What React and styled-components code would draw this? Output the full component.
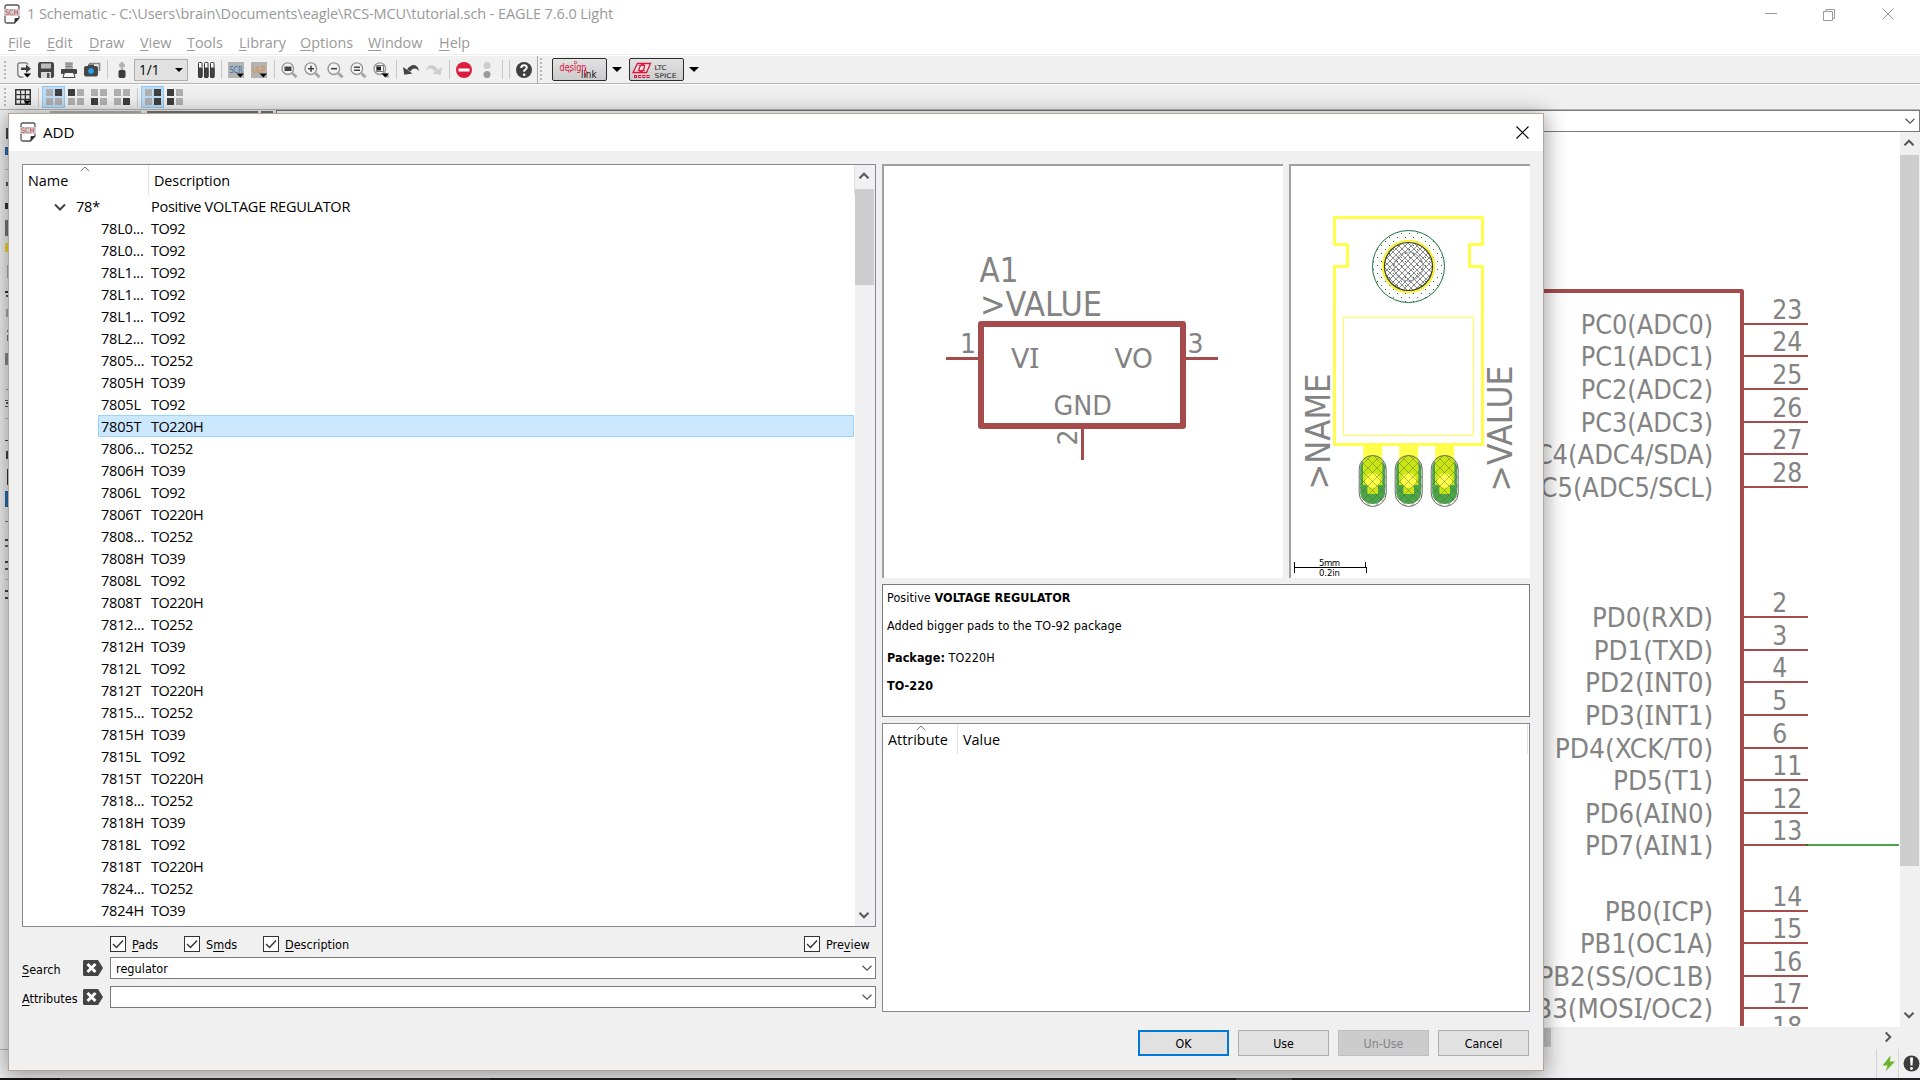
import React from "react";
import styled, { createGlobalStyle, css } from "styled-components";

const UI = `"Open Sans", "Noto Sans", sans-serif`;
const SMALL = `"DejaVu Sans Condensed", "DejaVu Sans", sans-serif`;

const Global = createGlobalStyle`
  * { box-sizing: border-box; }
  html, body { margin: 0; padding: 0; overflow: hidden; background: #f0f0f0; }
  svg { display: block; flex: none; }
  u { text-underline-offset: 2px; text-decoration-thickness: 1px; }
`;

/* ---------- main window ---------- */
const Window = styled.div`
  position: relative;
  width: 1920px;
  height: 1080px;
  display: flex;
  flex-direction: column;
  background: #f0f0f0;
  overflow: hidden;
  font-family: ${UI};
  color: #000;
`;
const TitleBar = styled.header`
  height: 30px;
  flex: none;
  display: flex;
  align-items: center;
  background: #fff;
  padding: 0 0 2px 4px;
`;
const Title = styled.span`
  margin-left: 7px;
  font-size: ${(p) => p.$size}px;
  line-height: 20px;
  letter-spacing: ${(p) => p.$ls || 0}px;
  color: ${(p) => p.$color};
  white-space: pre;
`;
const Controls = styled.div`
  margin-left: auto;
  display: flex;
  align-items: center;
`;
const MenuBar = styled.nav`
  height: 25px;
  flex: none;
  display: flex;
  background: #fff;
  border-bottom: 1px solid #f0f0f0;
  padding: 1px 0 0 8px;
`;
const MenuItem = styled.span`
  width: ${(p) => p.$w}px;
  font-size: 14.4px;
  line-height: 24px;
  color: #999;
  white-space: nowrap;
`;
const Toolbar = styled.div`
  height: ${(p) => p.$h}px;
  flex: none;
  display: flex;
  align-items: center;
  background: #f0f0f0;
  border-top: 1px solid #fff;
  border-bottom: 1px solid #b4b4b4;
  padding-left: 4px;
`;
const Handle = styled.div`
  width: ${(p) => p.$w}px;
  flex: none;
`;
const Cell = styled.div`
  width: 23px;
  height: 22px;
  flex: none;
  padding: 0 3px 0 4px;
  display: flex;
  align-items: center;
  ${(p) =>
    p.$on &&
    css`
      margin: 0 -1px 0 1px;
      padding: 0 2px 0 3px;
      background: #c0dcf3;
      border: 1px solid #90c8f6;
    `}
`;
const Sep = styled.div`
  width: 1px;
  height: 19px;
  flex: none;
  background: #c8c8c8;
  margin: 0 2px 0 4px;
`;
const EdgeLine = styled.div`
  width: 1px;
  height: 28px;
  background: #a8a8a8;
  margin: 0 2px;
`;
const SheetCombo = styled.div`
  width: 54px;
  height: 22px;
  margin: 0 6px 0 1px;
  border: 1px solid #adadad;
  background: #e1e1e1;
  display: flex;
  align-items: center;
  justify-content: space-between;
  padding: 0 4px;
  font-size: 13.6px;
  line-height: 20px;
`;
const BrandButton = styled.div`
  width: 55px;
  height: 23px;
  flex: none;
  margin-left: ${(p) => p.$ml}px;
  border: 1px solid #2b2b2b;
  border-radius: 2px;
  background: linear-gradient(#e2e2e2, #cccccc);
`;
const Caret = styled.div`
  width: 0;
  height: 0;
  margin-left: ${(p) => p.$ml || 0}px;
  border: ${(p) => p.$s || 5}px solid transparent;
  border-top-color: #000;
  border-bottom: none;
`;
const CommandRow = styled.div`
  height: 22px;
  flex: none;
  display: flex;
  gap: 3px;
  padding: 0 0 0 50px;
`;
const CommandPart = styled.div`
  width: ${(p) => p.$w}px;
  margin: 1px ${(p) => p.$mr || 0}px 0 0;
  border: 1px solid ${(p) => p.$c};
  border-width: 2px 1px 1px;
`;
const CommandInput = styled.div`
  flex: 1;
  height: 22px;
  background: #fff;
  border: 1px solid #7a7a7a;
  display: flex;
  align-items: center;
  justify-content: flex-end;
  padding-right: 3px;
`;
const Work = styled.div`
  height: 895px;
  flex: none;
  display: flex;
`;
const LeftTools = styled.div`
  width: 90px;
  padding-left: 5px;
`;
const Canvas = styled.div`
  flex: 1;
  background: #fff;
  display: flex;
  justify-content: flex-end;
  overflow: hidden;
`;
const VScroll = styled.div`
  width: 20px;
  flex: none;
  background: #f0f0f0;
  display: flex;
  flex-direction: column;
  align-items: stretch;
`;
const ArrowSlot = styled.div`
  height: ${(p) => p.$h}px;
  display: flex;
  align-items: center;
  justify-content: center;
  padding: 0 2px ${(p) => p.$pb || 0}px 0;
`;
const Thumb = styled.div`
  height: ${(p) => p.$h}px;
  margin-right: 1px;
  background: #cdcdcd;
`;
const Grow = styled.div`
  flex: 1;
`;
const HScroll = styled.div`
  height: 20px;
  flex: none;
  display: flex;
  align-items: center;
  padding-right: 26px;
`;
const HThumb = styled.div`
  width: 1451px;
  margin-left: 100px;
  height: 19px;
  background: #c4c4c4;
`;
const Status = styled.footer`
  height: 31px;
  flex: none;
  display: flex;
  align-items: center;
  justify-content: flex-end;
  padding-top: 2px;
`;
const StatusEdge = styled.div`
  width: 60px;
  height: 29px;
  margin-right: auto;
  border-top: 1px solid #b4b4b4;
`;
const StatusSep = styled.div`
  width: 1px;
  height: 29px;
  background: #d4d4d4;
`;
const TaskEdge = styled.div`
  height: 2px;
  display: flex;
  background: #212226;
`;
const TaskPiece = styled.div`
  width: ${(p) => p.$w}px;
  background: ${(p) => p.$c};
`;

/* ---------- dialog ---------- */
const Dialog = styled.section`
  position: absolute;
  left: 8px;
  top: 113px;
  width: 1536px;
  height: 958px;
  border: 1px solid #b5a596;
  background: #f0f0f0;
  box-shadow: 0 3px 20px 2px rgba(0, 0, 0, 0.38);
  display: flex;
  flex-direction: column;
`;
const DialogTitle = styled.div`
  height: 37px;
  flex: none;
  background: #fff;
  display: flex;
  align-items: center;
  padding: 0 14px 1px 11px;
`;
const DialogBody = styled.div`
  flex: 1;
  display: flex;
  gap: 6px;
  padding: 13px 13px 0;
`;
const LeftCol = styled.div`
  width: 854px;
  display: flex;
  flex-direction: column;
`;
const RightCol = styled.div`
  width: 648px;
  display: flex;
  flex-direction: column;
  gap: 6px;
`;
const TreeBox = styled.div`
  height: 763px;
  flex: none;
  border: 1px solid #828790;
  background: #fff;
  display: flex;
`;
const TreeMain = styled.div`
  flex: 1;
  display: flex;
  flex-direction: column;
`;
const HeaderRow = styled.div`
  height: 30px;
  flex: none;
  display: flex;
`;
const HeaderCell = styled.div`
  width: ${(p) => p.$w}px;
  ${(p) => p.$grow && "flex: 1;"}
  border-right: 1px solid #e2e2e2;
  padding-left: 5px;
  display: flex;
  flex-direction: column;
  font-size: 14.4px;
  line-height: 20px;
  letter-spacing: ${(p) => p.$ls || 0}px;
`;
const SortSlot = styled.div`
  height: 6px;
  padding: 1px 0 0 ${(p) => p.$x || 0}px;
`;
const Row = styled.div`
  height: 22px;
  flex: none;
  display: flex;
  align-items: center;
  margin: 0 1px 0 75px;
  padding-top: 1px;
  border: 1px solid ${(p) => (p.$sel ? "#99d1ff" : "transparent")};
  background: ${(p) => (p.$sel ? "#cce8ff" : "transparent")};
  font-size: 14.5px;
  line-height: 20px;
  white-space: pre;
`;
const NameCell = styled.span`
  width: 52px;
  padding-left: 2px;
  letter-spacing: -0.18px;
`;
const DescCell = styled.span`
  letter-spacing: ${(p) => p.$ls ?? -0.45}px;
`;
const ParentRow = styled(Row)`
  margin-left: 30px;
`;
const ParentName = styled.span`
  width: 85px;
  padding-left: 10px;
  letter-spacing: -0.2px;
`;
const Checks = styled.div`
  height: 16px;
  margin: 9px 0 5px 88px;
  display: flex;
  align-items: center;
  font: 12.5px/16px ${SMALL};
`;
const Check = styled.label`
  width: ${(p) => p.$w}px;
  margin-left: ${(p) => p.$ml || 0};
  display: flex;
  gap: 6px;
  align-items: center;
  white-space: nowrap;
  span { padding-top: 1px; }
`;
const Box = styled.i`
  width: 16px;
  height: 16px;
  flex: none;
  border: 1px solid #333;
  background: #fff;
  display: flex;
  align-items: center;
  justify-content: center;
`;
const Field = styled.div`
  height: 22px;
  margin-bottom: 7px;
  display: flex;
  align-items: center;
  font: 12.5px/16px ${SMALL};
`;
const FieldLabel = styled.span`
  width: 61px;
  padding-top: 3px;
`;
const Combo = styled.div`
  flex: 1;
  height: 22px;
  margin-left: 7px;
  border: 1px solid #7a7a7a;
  background: #fff;
  display: flex;
  align-items: center;
  justify-content: space-between;
  padding: 0 2px 0 5px;
  letter-spacing: 0.05px;
  span { padding-top: 1px; }
`;
const Previews = styled.div`
  height: 414px;
  flex: none;
  display: flex;
  justify-content: space-between;
`;
const Preview = styled.div`
  width: ${(p) => p.$w}px;
  background: #fff;
  border: solid #a0a0a0;
  border-width: 2px 0 0 2px;
`;
const Info = styled.div`
  height: 133px;
  flex: none;
  border: 1px solid #7a7a7a;
  background: #fff;
  padding: 5px 4px 0;
  font: 12.5px/16px ${SMALL};
`;
const Para = styled.p`
  margin: 0 0 ${(p) => p.$mb || 12}px;
  letter-spacing: ${(p) => p.$ls ?? 0.07}px;
  white-space: pre;
`;
const AttrBox = styled.div`
  height: 289px;
  flex: none;
  border: 1px solid #828790;
  background: #fff;
  padding-right: 1px;
`;
const Buttons = styled.div`
  margin-top: 12px;
  display: flex;
  justify-content: flex-end;
  gap: 9px;
  padding-right: 1px;
`;
const Button = styled.div`
  width: 91px;
  height: 26px;
  border: ${(p) => (p.$primary ? "2px solid #0078d7" : p.$off ? "1px solid #bfbfbf" : "1px solid #adadad")};
  background: ${(p) => (p.$off ? "#cccccc" : "#e1e1e1")};
  color: ${(p) => (p.$off ? "#838383" : "#000")};
  display: flex;
  align-items: center;
  justify-content: center;
  padding-top: 1px;
  font: 12.3px/16px ${SMALL};
`;

/* ---------- icons ---------- */
const SchIcon = () => (
  <svg width="16" height="20" viewBox="0 0 16 20">
    <path d="M3 1h10q2 0 2 2v11l-4.500 5H3q-2 0-2-2V3q0-2 2-2z" fill="#fff" stroke="#555" strokeWidth="1.300" />
    <path d="M10.500 19.500V15q0-1 1-1h4z" fill="#333" />
    <rect x="0" y="5" width="16" height="7" fill="#cfcfcf" />
    <text x="1" y="11.200" fontSize="7.500" textLength="13.500" lengthAdjust="spacingAndGlyphs" fontFamily={SMALL} fill="#cc3e48">SCH</text>
  </svg>
);
const Chevron = ({ dir = "up", w = 9, c = "#555", s = 2 }) => {
  const r = { up: 0, right: 90, down: 180 }[dir];
  return (
    <svg width="12" height="12" viewBox="-6 -6 12 12">
      <path d={`M${-w / 2} ${w / 4}L0 ${-w / 4}L${w / 2} ${w / 4}`} transform={`rotate(${r})`} fill="none" stroke={c} strokeWidth={s} />
    </svg>
  );
};
const SortMark = () => (
  <svg width="10" height="6" viewBox="0 0 10 6">
    <path d="M.7 5.200L5 1l4.300 4.200" fill="none" stroke="#777" />
  </svg>
);
const Grip = ({ h = 20 }) => (
  <svg width="3" height={h}>
    {Array.from({ length: Math.floor(h / 4) }, (_, i) => (
      <rect key={i} x="0" y={i * 4 + 1} width="2" height="2" fill="#b8b8b8" />
    ))}
  </svg>
);
const Ico = ({ children }) => (
  <svg width="16" height="16" viewBox="0 0 16 16" overflow="visible">{children}</svg>
);
const drop = <path d="M8.500 11.500h7.500l-3.700 4z" fill="#000" />;
const OpenIcon = () => (
  <Ico>
    <path d="M13 2.500Q12.500 .8 10.500 .8H5Q2.800 .8 2.800 3V12.500Q3.500 15 6 15.200H8.500" fill="none" stroke="#777" strokeWidth="1.300" />
    <path d="M6 5.500h5V2.500l5 4.200-5 4.200V8H6z" fill="#3f3f3f" />
    {drop}
  </Ico>
);
const SaveIcon = () => (
  <Ico>
    <path d="M1.500 0h13L16 1.500V14.500L14.500 16H1.500L0 14.500V1.500z" fill="#454545" />
    <rect x="3" y="1.500" width="10" height="5" fill="#bdbdbd" />
    <rect x="3" y="10" width="10" height="6" fill="#d8d8d8" />
    <rect x="9" y="11" width="2.500" height="5" fill="#555" />
  </Ico>
);
const PrintIcon = () => (
  <Ico>
    <rect x="4" y="0" width="8" height="7" fill="#b3b3b3" />
    <path d="M5 2h6M5 4.500h6" stroke="#777" />
    <rect x="0" y="7" width="16" height="5" rx="1" fill="#454545" />
    <path d="M3.500 10.500h9L14 15.500H2z" fill="#f5f5f5" stroke="#454545" />
  </Ico>
);
const CameraIcon = () => (
  <Ico>
    <path d="M5 1.500h10.500V9" fill="none" stroke="#888" strokeWidth="1.600" />
    <rect x="0" y="4" width="14" height="10.500" rx="2" fill="#474747" />
    <rect x="4" y="2.500" width="6" height="3" fill="#474747" />
    <circle cx="7" cy="9" r="3.400" fill="#2fa0e6" stroke="#2c3c48" strokeWidth=".8" />
  </Ico>
);
const BoardIcon = () => (
  <Ico>
    <path d="M8 0v8M5 3.500h6M5.500 2.500h4" stroke="#b0b0b0" strokeWidth="2.500" />
    <path d="M5.500 8.500h5v7h-5zM4 10h8M4 12h8M4 14h8" stroke="#3c3c3c" fill="#3c3c3c" strokeWidth="1" />
  </Ico>
);
const TubesIcon = () => (
  <Ico>
    {[0, 6, 12].map((x) => (
      <g key={x}>
        <rect x={x + 0.500} y=".5" width="3.500" height="15" rx="1" fill="#fff" stroke="#333" />
        <rect x={x + 0.500} y="6" width="3.500" height="9.500" rx="1" fill="#444" stroke="#333" />
      </g>
    ))}
  </Ico>
);
const TagIcon = ({ t, c }) => (
  <Ico>
    <rect width="16" height="16" fill="#b3b3b3" />
    <text x="1.500" y="11" fontSize="8.500" textLength="13" lengthAdjust="spacingAndGlyphs" fontFamily={SMALL} fill={c}>{t}</text>
    {drop}
  </Ico>
);
const Zoom = ({ children }) => (
  <Ico>
    <circle cx="6.800" cy="6.700" r="5.800" fill="#f4f4f4" stroke="#979797" strokeWidth="1.400" />
    <path d="M11.500 11.200l4 4" stroke="#a5a5a5" strokeWidth="3" />
    {children}
  </Ico>
);
const UndoIcon = ({ flip, c }) => (
  <Ico>
    <g transform={flip ? "translate(16 0) scale(-1 1)" : undefined}>
      <path d="M4 7.500Q7 3 11 3Q15 3.500 16 9Q14 6.500 11 6.600Q8.500 7 7.500 9.500z" fill={c} />
      <path d="M0 5L1.300 12.800L9.500 11.500z" fill={c} />
    </g>
  </Ico>
);
const LayoutIcon = ({ dark }) => (
  <Ico>
    {[[0, 0], [9, 0], [0, 9], [9, 9]].map(([x, y], i) => (
      <rect key={i} x={x} y={y} width="7" height="7" fill={dark.includes(i) ? "#3f3f3f" : "#b0b0b0"} />
    ))}
  </Ico>
);
const GridIcon = () => (
  <Ico>
    <rect x="0" y="0" width="16" height="16" fill="#383838" />
    {[1.500, 6.200, 11].map((x) => [1.500, 6.200, 11].map((y) => <rect key={x + "-" + y} x={x} y={y} width="3.500" height="3.500" fill="#e8e8e8" />))}
    {drop}
  </Ico>
);
const DesignLink = () => (
  <svg width="53" height="21" viewBox="0 0 53 21">
    <text x="6.500" y="11.500" fontSize="10.500" textLength="27" lengthAdjust="spacingAndGlyphs" fontFamily={SMALL} fill="#dc143c">design</text>
    <text x="28" y="19" fontSize="10" textLength="15.500" lengthAdjust="spacingAndGlyphs" fontFamily={SMALL} fill="#111">link</text>
    <path d="M32.500 9v9" stroke="#dc143c" />
    <circle cx="22.500" cy="3.500" r="1.200" fill="#e1e1e1" stroke="#dc143c" strokeWidth=".8" />
    <circle cx="16.500" cy="12" r="1.200" fill="#e1e1e1" stroke="#dc143c" strokeWidth=".8" />
    <circle cx="32.500" cy="13" r="1.200" fill="#e1e1e1" stroke="#dc143c" strokeWidth=".8" />
  </svg>
);
const LtcSpice = () => (
  <svg width="53" height="21" viewBox="0 0 53 21">
    <path d="M7.500 4.500H20.500L16.500 13.500H3z" fill="#efe4e6" stroke="#dc143c" strokeWidth="1.300" />
    <ellipse cx="11.800" cy="9" rx="2.200" ry="3.800" transform="rotate(24 11.800 9)" fill="none" stroke="#dc143c" strokeWidth="1.300" />
    <path d="M8.500 6.500h7M7.500 11.500h7.500" stroke="#dc143c" strokeWidth=".8" />
    {[4.500, 8.700, 12.900, 17].map((x) => <rect key={x} x={x} y="16.500" width="2" height="2" fill="none" stroke="#dc143c" />)}
    <text x="24.500" y="11" fontSize="6.500" textLength="12" lengthAdjust="spacingAndGlyphs" fontFamily={SMALL} fill="#222">LTC</text>
    <text x="24.500" y="18.500" fontSize="6.500" textLength="22" lengthAdjust="spacingAndGlyphs" fontFamily={SMALL} fill="#222">SPICE</text>
  </svg>
);
const ClearIcon = () => (
  <svg width="20" height="16" viewBox="0 0 20 16">
    <path d="M1 0H15L20 8L15 16H1L0 15V1z" fill="#444" />
    <path d="M4.500 4l8 8M12.500 4l-8 8" stroke="#fff" strokeWidth="3" />
  </svg>
);
const Tick = () => (
  <svg width="12" height="10" viewBox="0 0 12 10">
    <path d="M1 5l3.500 3.500L11 1.500" fill="none" stroke="#333" strokeWidth="1.400" />
  </svg>
);

/* visible slivers of the vertical tool palette */
const slivers = [
  [-4, 11, 2, "#444"], [15, 8, 3, "#2a6cb0"], [37, 1, 3, "#bbb"], [50, 4, 2, "#555"], [71, 6, 3, "#333"],
  [88, 16, 3, "#777"], [111, 9, 3, "#f0d830"], [133, 13, 1, "#aaa"], [159, 2, 3, "#333"], [163, 2, 2, "#555"],
  [177, 8, 2, "#aaa"], [198, 2, 1, "#777"], [203, 6, 1, "#777"], [221, 12, 3, "#888"], [257, 1, 2, "#888"],
  [268, 1, 3, "#555"], [270, 2, 2, "#555"], [274, 1, 3, "#555"], [286, 1, 3, "#bbb"], [308, 1, 3, "#444"],
  [319, 8, 2, "#444"], [337, 16, 1, "#333"], [359, 16, 3, "#2a6cb0"], [389, 1, 3, "#777"], [407, 2, 3, "#444"],
  [413, 2, 3, "#666"], [429, 2, 3, "#444"], [436, 2, 3, "#555"], [447, 1, 3, "#bbb"], [458, 2, 3, "#444"], [465, 2, 3, "#444"],
];
const ToolSlivers = () => (
  <svg width="3" height="480" overflow="visible">
    {slivers.map(([y, h, w, c]) => <rect key={y} x={3 - w} y={y} width={w} height={h} fill={c} />)}
  </svg>
);

/* ---------- schematic text: serifed capital I comes from the second family ---------- */
const glyphs = (s) =>
  s.split(/(I)/).filter(Boolean).map((t, i) => (
    <tspan key={i} fontFamily={t === "I" ? `"Noto Sans", sans-serif` : SMALL}>{t}</tspan>
  ));
const T = ({ x, y, w, size, children, end, rot }) => (
  <text
    x={x} y={y} fontSize={size} fill="#838383" textLength={w} lengthAdjust="spacingAndGlyphs"
    textAnchor={end ? "end" : "start"} transform={rot ? `rotate(-90 ${x} ${y})` : undefined}
  >
    {glyphs(children)}
  </text>
);

const pins = [
  [324, "23", "PC0(ADC0)", 1582.700], [356, "24", "PC1(ADC1)", 1582.700], [389, "25", "PC2(ADC2)", 1582.700],
  [422, "26", "PC3(ADC3)", 1582.700], [454, "27", "PC4(ADC4/SDA)", 1523], [487, "28", "PC5(ADC5/SCL)", 1528],
  [617, "2", "PD0(RXD)", 1594], [650, "3", "PD1(TXD)", 1595.700], [682, "4", "PD2(INT0)", 1587], [715, "5", "PD3(INT1)", 1587],
  [748, "6", "PD4(XCK/T0)", 1556.700], [780, "11", "PD5(T1)", 1615], [813, "12", "PD6(AIN0)", 1587], [845, "13", "PD7(AIN1)", 1587],
  [911, "14", "PB0(ICP)", 1606.700], [943, "15", "PB1(OC1A)", 1582], [976, "16", "PB2(SS/OC1B)", 1540.500],
  [1008, "17", "PB3(MOSI/OC2)", 1522.400], [1041, "18", "", 0],
];
const MainSchematic = () => (
  <svg width="400" height="894" viewBox="1500 132 400 894">
    <path d="M1500 291H1742V1030" fill="none" stroke="#a54b4b" strokeWidth="4" strokeLinejoin="round" />
    {pins.map(([y, n, label, left]) => (
      <g key={n}>
        <rect x="1744" y={y - 1} width="64" height="2" fill="#a54b4b" />
        <T x={1772.200} y={y - 4.800} w={n.length * 15} size={26.500}>{n}</T>
        {label && <T x={1713.200} y={y + 9.500} w={1713.200 - left + 2} size={26.500} end>{label}</T>}
      </g>
    ))}
    <rect x="1806" y="844" width="93" height="2" fill="#4ba54b" />
    <rect x="1806" y="844" width="2" height="2" fill="#2c6e1e" />
  </svg>
);
const SymbolPreview = () => (
  <svg width="399" height="412" viewBox="884 166 399 412">
    <rect x="981" y="324" width="202" height="102" fill="none" stroke="#a54b4b" strokeWidth="6" strokeLinejoin="round" />
    <path d="M946 358.500H980M1184 358.500H1218M1082.500 427V460" stroke="#a54b4b" strokeWidth="3" />
    <T x={979.500} y={282.300} w={39} size={33}>A1</T>
    <T x={980} y={316} w={122} size={33}>{">VALUE"}</T>
    <T x={960} y={352.500} w={16} size={27}>1</T>
    <T x={1187.500} y={352.500} w={16} size={27}>3</T>
    <T x={1011} y={367.700} w={28.500} size={27}>VI</T>
    <T x={1114.500} y={367.700} w={38.500} size={27}>VO</T>
    <T x={1053.500} y={414.700} w={58.500} size={27}>GND</T>
    <T x={1076.700} y={445.500} w={16} size={27} rot>2</T>
  </svg>
);
const PackagePreview = () => (
  <svg width="239" height="412" viewBox="1291 166 239 412">
    <defs>
      <pattern id="hatch" x="1" width="6" height="6" patternUnits="userSpaceOnUse">
        <path d="M0 0L6 6M6 0L0 6" stroke="#808080" strokeWidth=".9" />
      </pattern>
      <pattern id="padhatch" width="9" height="9" patternUnits="userSpaceOnUse">
        <path d="M0 0L9 9M9 0L0 9" stroke="#505a30" strokeOpacity=".5" strokeWidth=".8" />
      </pattern>
      <pattern id="dots" width="8" height="8" patternUnits="userSpaceOnUse">
        <path d="M1 1h1v1h-1zM5 5h1v1h-1z" fill="#1e7040" />
      </pattern>
    </defs>
    <circle cx="1408.500" cy="266.500" r="36" fill="url(#dots)" stroke="#1e7040" />
    <circle cx="1408.500" cy="266.500" r="24" fill="url(#hatch)" />
    <circle cx="1408.500" cy="266.500" r="14.500" fill="none" stroke="#9a9a9a" />
    <circle cx="1408.500" cy="266.500" r="25.500" fill="none" stroke="#f6f23e" strokeWidth="2.600" />
    <circle cx="1408.500" cy="266.500" r="24" fill="none" stroke="#3c3c30" strokeWidth="1.200" />
    <path
      d="M1334.500 217.500H1482.500V244.500H1469.500V266.500H1482.500V444.500H1334.500V266.500H1347.500V244.500H1334.500z"
      fill="none" stroke="#ffff4b" strokeWidth="3" strokeLinejoin="round"
    />
    <rect x="1343.500" y="317.500" width="130" height="118" fill="none" stroke="#ffff4b" />
    {[1372.700, 1408.700, 1444.700].map((x) => (
      <g key={x}>
        <rect x={x - 12.500} y="456" width="25" height="48" rx="12.500" fill="#4ba54b" />
        <rect x={x - 9.500} y="445" width="19" height="40" fill="#ffff4b" />
        <path d={`M${x - 9.500} 459Q${x} 451 ${x + 9.500} 459V485H${x + 5.300}V494H${x - 5.300}V485H${x - 9.500}z`} fill="#c8e614" />
        <circle cx={x} cy="480.500" r="7.500" fill="#ffff4b" />
        <rect x={x - 13.500} y="455.500" width="27" height="51" rx="13.500" fill="url(#padhatch)" stroke="#6a6a6a" />
      </g>
    ))}
    <T x={1330} y={489.500} w={116} size={34} rot>{">NAME"}</T>
    <T x={1512} y={491.500} w={126} size={34} rot>{">VALUE"}</T>
    <path d="M1294.500 562V573M1294 567.500H1367M1365.500 562V567M1366.500 567V573" stroke="#000" fill="none" />
    <text x="1319" y="566" fontSize="9.500" textLength="21" fontFamily={SMALL}>5mm</text>
    <text x="1319" y="576" fontSize="9.500" textLength="21" fontFamily={SMALL}>0.2in</text>
  </svg>
);

const tree = [
  ["78L0...", "TO92"], ["78L0...", "TO92"], ["78L1...", "TO92"], ["78L1...", "TO92"], ["78L1...", "TO92"], ["78L2...", "TO92"],
  ...["7805", "7806", "7808", "7812", "7815", "7818"].flatMap((n) => [
    [n + "...", "TO252"], [n + "H", "TO39"], [n + "L", "TO92"], [n + "T", "TO220H"],
  ]),
  ["7824...", "TO252"], ["7824H", "TO39"],
];
const menus = [["F", "ile", 39], ["E", "dit", 42], ["D", "raw", 51], ["V", "iew", 47], ["T", "ools", 52], ["L", "ibrary", 61], ["O", "ptions", 68], ["W", "indow", 71], ["H", "elp", 50]];

export default function App() {
  return (
    <Window>
      <Global />
      <TitleBar>
        <SchIcon />
        <Title $color="#999" $size={14.500} $ls={-0.090}>1 Schematic - C:\Users\brain\Documents\eagle\RCS-MCU\tutorial.sch - EAGLE 7.6.0 Light</Title>
        <Controls>
          <svg width="160" height="16" viewBox="0 0 160 16">
            <path d="M5 7.500h12M63.500 5.500h9v9h-9zM66 5V3.500h8.500v9H73M122.500 2.500l11 11M133.500 2.500l-11 11" fill="none" stroke="#999" />
          </svg>
        </Controls>
      </TitleBar>
      <MenuBar>
        {menus.map(([a, b, w]) => <MenuItem key={a} $w={w}><u>{a}</u>{b}</MenuItem>)}
      </MenuBar>
      <Toolbar $h={29}>
        <Grip />
        <Handle $w={4} />
        <Cell><OpenIcon /></Cell>
        <Cell><SaveIcon /></Cell>
        <Cell><PrintIcon /></Cell>
        <Cell><CameraIcon /></Cell>
        <Sep />
        <Cell><BoardIcon /></Cell>
        <SheetCombo>1/1<Caret $s={4} /></SheetCombo>
        <Cell><TubesIcon /></Cell>
        <Sep />
        <Cell><TagIcon t="SCR" c="#2a70b8" /></Cell>
        <Cell><TagIcon t="ULP" c="#e09028" /></Cell>
        <Sep />
        <Cell><Zoom><rect x="3.500" y="4.500" width="7" height="4.500" fill="#444" /></Zoom></Cell>
        <Cell><Zoom><path d="M4 6.700h6M7 3.700v6" stroke="#444" strokeWidth="1.600" /></Zoom></Cell>
        <Cell><Zoom><path d="M4 6.700h6" stroke="#444" strokeWidth="1.600" /></Zoom></Cell>
        <Cell><Zoom><path d="M4 5.200h6M4 8.200h6" stroke="#444" strokeWidth="1.600" /></Zoom></Cell>
        <Cell><Zoom><path d="M3.500 3.500h7v6h-7z" fill="none" stroke="#777" /><rect x="4" y="4.500" width="4" height="4" fill="#222" />{drop}</Zoom></Cell>
        <Sep />
        <Cell><UndoIcon c="#444" /></Cell>
        <Cell><UndoIcon flip c="#ccc" /></Cell>
        <Sep />
        <Cell><Ico><circle cx="8" cy="8" r="8" fill="#dc1e3c" /><rect x="2.500" y="6.500" width="11" height="3" fill="#fff" /></Ico></Cell>
        <Cell><Ico><circle cx="8" cy="3.500" r="3.500" fill="#ccc" /><circle cx="8" cy="12.500" r="3.500" fill="#999" /></Ico></Cell>
        <Sep />
        <Sep />
        <Cell>
          <Ico>
            <circle cx="8" cy="8" r="8" fill="#3f3f3f" />
            <path d="M5.200 6Q5.200 3.200 8 3.200Q10.800 3.200 10.800 5.600Q10.800 7 8.200 8.500V9.800" fill="none" stroke="#fff" strokeWidth="2" />
            <circle cx="8.200" cy="12.700" r="1.300" fill="#fff" />
          </Ico>
        </Cell>
        <EdgeLine />
        <Grip h={26} />
        <BrandButton $ml={9}><DesignLink /></BrandButton>
        <Caret $ml={5} />
        <BrandButton $ml={7}><LtcSpice /></BrandButton>
        <Caret $ml={5} />
      </Toolbar>
      <Toolbar $h={26}>
        <Grip />
        <Handle $w={4} />
        <Cell><GridIcon /></Cell>
        <Sep />
        <Cell $on><LayoutIcon dark={[1]} /></Cell>
        <Cell><LayoutIcon dark={[0]} /></Cell>
        <Cell><LayoutIcon dark={[2]} /></Cell>
        <Cell><LayoutIcon dark={[3]} /></Cell>
        <Sep />
        <Cell $on><LayoutIcon dark={[1, 3]} /></Cell>
        <Cell><LayoutIcon dark={[0, 2]} /></Cell>
      </Toolbar>
      <CommandRow>
        <CommandPart $w={91} $mr={3} $c="#b0b0b0" />
        <CommandPart $w={111} $c="#777" />
        <CommandPart $w={12} $c="#777" />
        <CommandInput><Chevron dir="down" w={9} s={1.200} /></CommandInput>
      </CommandRow>
      <Work>
        <LeftTools><ToolSlivers /></LeftTools>
        <Canvas><MainSchematic /></Canvas>
        <VScroll>
          <ArrowSlot $h={23} $pb={2}><Chevron /></ArrowSlot>
          <Thumb $h={711} />
          <Grow />
          <ArrowSlot $h={24}><Chevron dir="down" /></ArrowSlot>
        </VScroll>
      </Work>
      <HScroll>
        <HThumb />
        <Grow />
        <Chevron dir="right" />
      </HScroll>
      <Status>
        <StatusEdge />
        <StatusSep />
        <svg width="21" height="29" viewBox="0 0 21 29">
          <path d="M13.500 6.500L5.500 16.500H10.500L8.500 22.500L18 12.500H13z" fill="#6fb52c" />
        </svg>
        <StatusSep />
        <svg width="21" height="29" viewBox="0 0 21 29">
          <circle cx="12.500" cy="14.500" r="8" fill="#3c3c3c" />
          <path d="M11 8.500h3l-.5 8h-2z" fill="#fff" />
          <circle cx="12.500" cy="19.500" r="1.400" fill="#fff" />
        </svg>
      </Status>
      <TaskEdge>
        <TaskPiece $w={60} $c="#171518" />
        <TaskPiece $w={430} $c="#323034" />
        <TaskPiece $w={746} $c="#212226" />
        <TaskPiece $w={56} $c="#4a4a4e" />
      </TaskEdge>

      <Dialog>
        <DialogTitle>
          <SchIcon />
          <Title $color="#000" $size={15.200}>ADD</Title>
          <Controls>
            <svg width="13" height="13" viewBox="0 0 13 13">
              <path d="M.5.5l12 12M12.500.5l-12 12" stroke="#000" strokeWidth="1.100" />
            </svg>
          </Controls>
        </DialogTitle>
        <DialogBody>
          <LeftCol>
            <TreeBox>
              <TreeMain>
                <HeaderRow>
                  <HeaderCell $w={126}><SortSlot $x={52}><SortMark /></SortSlot>Name</HeaderCell>
                  <HeaderCell $grow $ls={-0.080}><SortSlot />Description</HeaderCell>
                </HeaderRow>
                <ParentRow>
                  <Chevron dir="down" w={10} c="#404040" />
                  <ParentName>78*</ParentName>
                  <DescCell $ls={-0.270}>Positive VOLTAGE REGULATOR</DescCell>
                </ParentRow>
                {tree.map(([n, d], i) => (
                  <Row key={i} $sel={i === 9}>
                    <NameCell>{n}</NameCell>
                    <DescCell>{d}</DescCell>
                  </Row>
                ))}
              </TreeMain>
              <VScroll>
                <ArrowSlot $h={24} $pb={2}><Chevron /></ArrowSlot>
                <Thumb $h={96} />
                <Grow />
                <ArrowSlot $h={22}><Chevron dir="down" /></ArrowSlot>
              </VScroll>
            </TreeBox>
            <Checks>
              <Check $w={74}><Box><Tick /></Box><span><u>P</u>ads</span></Check>
              <Check $w={79}><Box><Tick /></Box><span>S<u>m</u>ds</span></Check>
              <Check $w={90}><Box><Tick /></Box><span><u>D</u>escription</span></Check>
              <Check $w={72} $ml="auto"><Box><Tick /></Box><span>Pre<u>v</u>iew</span></Check>
            </Checks>
            <Field>
              <FieldLabel><u>S</u>earch</FieldLabel>
              <ClearIcon />
              <Combo><span>regulator</span><Chevron dir="down" w={9} s={1.200} /></Combo>
            </Field>
            <Field>
              <FieldLabel><u>A</u>ttributes</FieldLabel>
              <ClearIcon />
              <Combo><span /><Chevron dir="down" w={9} s={1.200} /></Combo>
            </Field>
          </LeftCol>
          <RightCol>
            <Previews>
              <Preview $w={401}><SymbolPreview /></Preview>
              <Preview $w={241}><PackagePreview /></Preview>
            </Previews>
            <Info>
              <Para>Positive <b>VOLTAGE REGULATOR</b></Para>
              <Para $mb={16}>Added bigger pads to the TO-92 package</Para>
              <Para><b>Package:</b> TO220H</Para>
              <Para><b>TO-220</b></Para>
            </Info>
            <AttrBox>
              <HeaderRow>
                <HeaderCell $w={75}><SortSlot $x={28}><SortMark /></SortSlot>Attribute</HeaderCell>
                <HeaderCell $grow><SortSlot />Value</HeaderCell>
              </HeaderRow>
            </AttrBox>
            <Buttons>
              <Button $primary>OK</Button>
              <Button>Use</Button>
              <Button $off>Un-Use</Button>
              <Button>Cancel</Button>
            </Buttons>
          </RightCol>
        </DialogBody>
      </Dialog>
    </Window>
  );
}
